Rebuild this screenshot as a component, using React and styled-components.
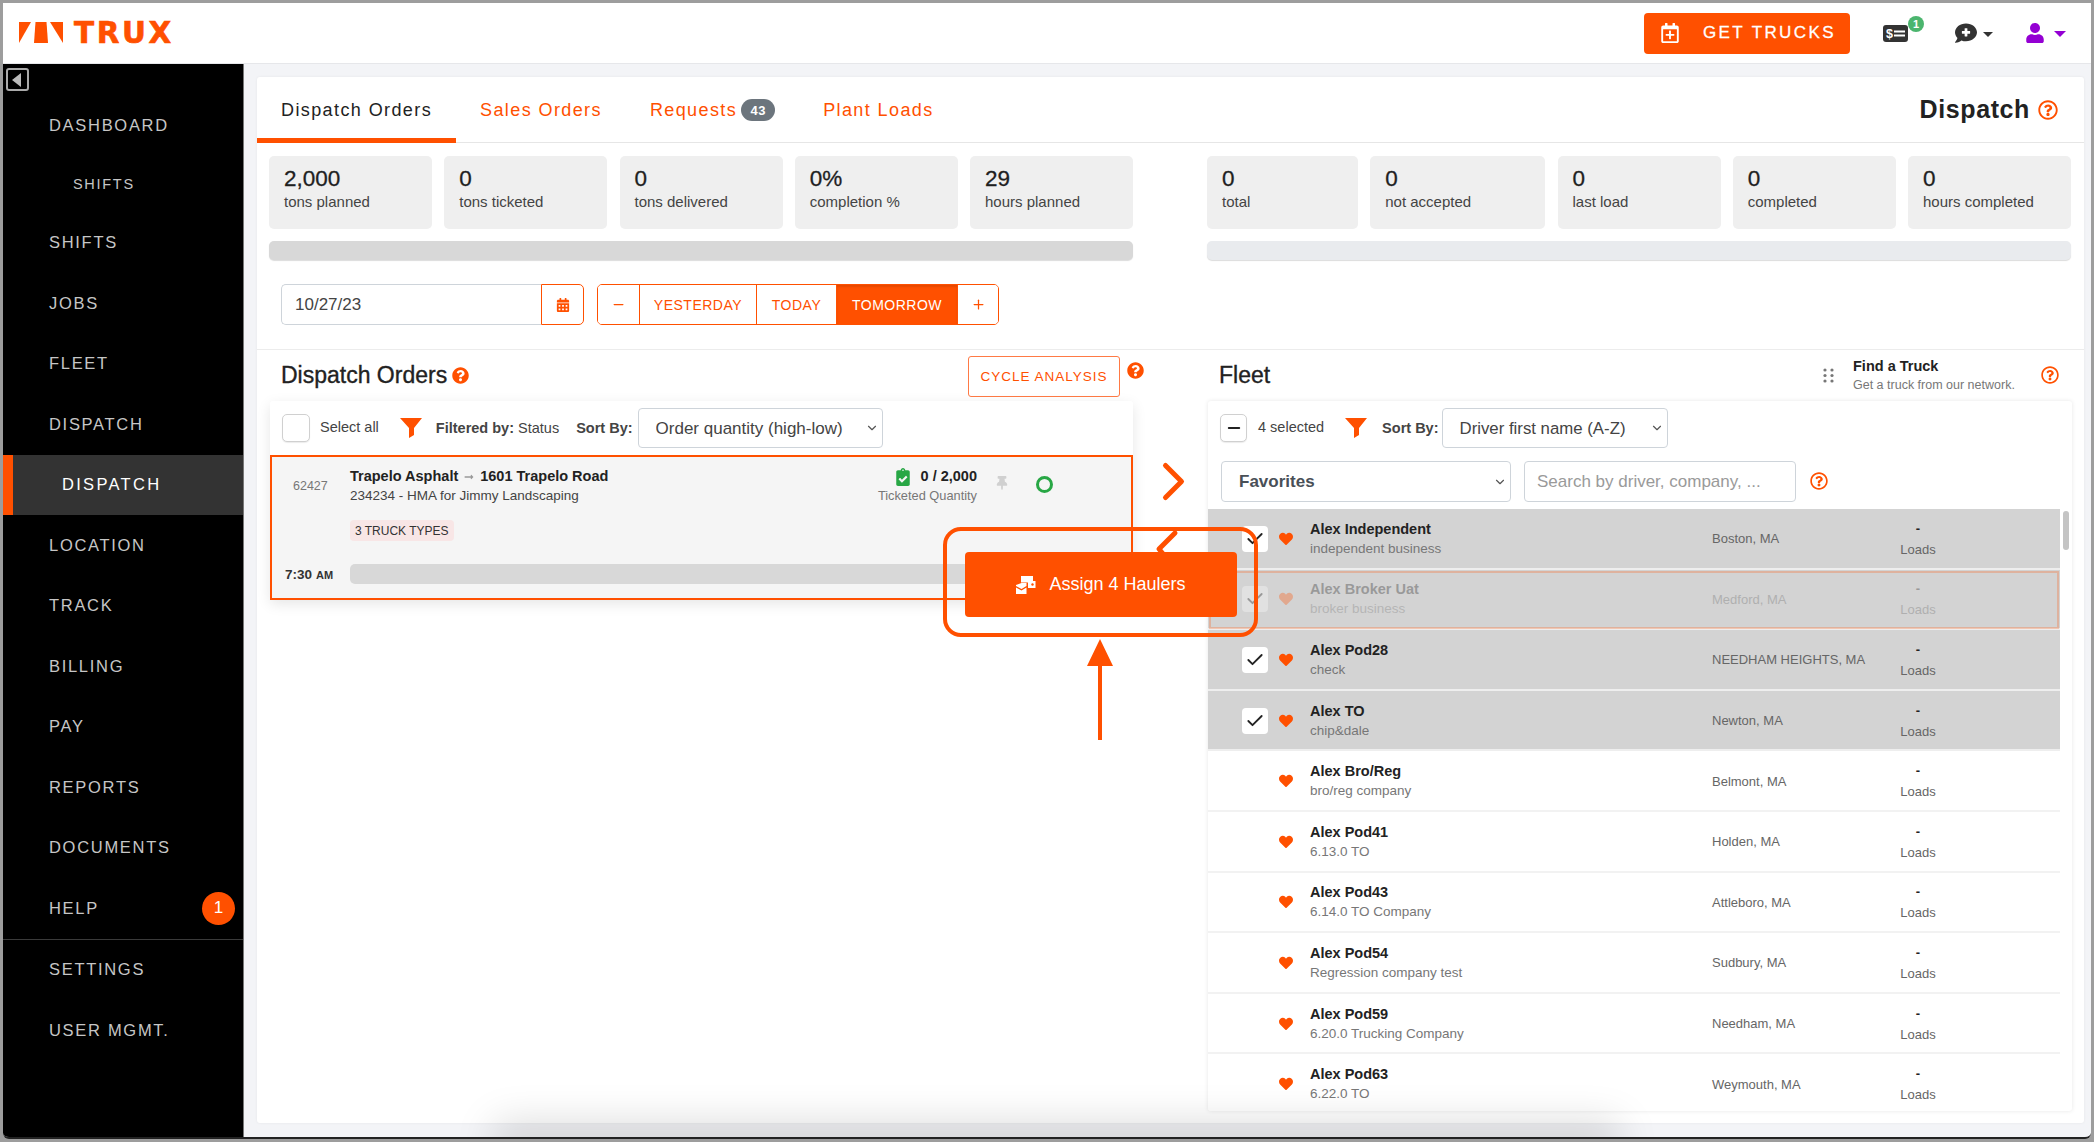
import React from 'react';
import styled, { createGlobalStyle } from 'styled-components';
import {
  FaRegCalendarPlus,
  FaCommentMedical,
  FaUser,
  FaQuestionCircle,
  FaRegQuestionCircle,
  FaCalendarAlt,
  FaClipboardCheck,
  FaThumbtack,
  FaHeart,
  FaLongArrowAltRight,
} from 'react-icons/fa';
import { Check, ChevronDown, Minus, Plus } from 'lucide-react';

const ORANGE = '#ff5000';

const GlobalStyle = createGlobalStyle`
  html, body {
    margin: 0;
    height: 1142px;
    overflow: hidden;
    background: #9d9d9d;
  }
  * { box-sizing: border-box; }
  body, input, select, button {
    font-family: "Liberation Sans", Arial, sans-serif;
  }
`;

const Frame = styled.div`
  position: relative;
  margin: 3px 0 0 3px;
  width: 2088px;
  height: 1136px;
  border-bottom: 2px solid #222;
  border-radius: 0 0 6px 6px;
  overflow: hidden;
  display: flex;
  flex-direction: column;
  background: #f3f4f7;
`;

/* top bar */
const TopBar = styled.header`
  height: 61px;
  flex: none;
  background: #fff;
  border-bottom: 1px solid #e6e7ea;
  display: flex;
  align-items: center;
  padding: 0 25px 0 16px;
`;

const Logo = styled.div`
  display: flex;
  align-items: center;
  gap: 11px;
  margin-top: -1px;
`;

const LogoText = styled.span`
  font-family: "DejaVu Sans", sans-serif;
  font-weight: 700;
  font-size: 29.5px;
  line-height: 22px;
  letter-spacing: 2.6px;
  color: ${ORANGE};
  -webkit-text-stroke: 0.6px ${ORANGE};
`;

const GetTrucks = styled.button`
  margin-left: auto;
  width: 206px;
  height: 41px;
  border: none;
  border-radius: 4px;
  background: ${ORANGE};
  color: #fff;
  display: flex;
  align-items: center;
  padding: 0 0 0 16px;
  gap: 23px;
  font-size: 17px;
  letter-spacing: 2.4px;
  -webkit-text-stroke: 0.3px #fff;
`;

const MoneyIcon = styled.div`
  position: relative;
  margin-left: 33px;
  display: flex;
`;

const GreenDot = styled.span`
  position: absolute;
  left: 25px;
  top: -9px;
  width: 16px;
  height: 16px;
  border-radius: 50%;
  background: #4bb56e;
  color: #fff;
  font-size: 11px;
  font-weight: 700;
  display: flex;
  align-items: center;
  justify-content: center;
`;

const Caret = styled.span`
  width: 0;
  height: 0;
  margin-left: ${(p) => p.$gap}px;
  margin-top: 2px;
  border-left: ${(p) => p.$size}px solid transparent;
  border-right: ${(p) => p.$size}px solid transparent;
  border-top: ${(p) => p.$size}px solid ${(p) => p.$color};
`;

const HeaderIcon = styled.span`
  display: flex;
  margin-left: ${(p) => p.$left}px;
  color: ${(p) => p.$color};
`;

/* sidebar */
const Body = styled.div`
  flex: 1;
  display: flex;
  min-height: 0;
`;

const Sidebar = styled.aside`
  width: 241px;
  flex: none;
  background: #000;
  border-right: 1px solid #777;
  display: flex;
  flex-direction: column;
`;

const Toggle = styled.div`
  width: 23px;
  height: 23px;
  margin: 4px 0 0 3px;
  border: 2px solid #aaa;
  border-radius: 3px;
  display: flex;
  align-items: center;
  padding-left: 4px;
  &::before {
    content: '';
    border-top: 7px solid transparent;
    border-bottom: 7px solid transparent;
    border-right: 9px solid #bbb;
  }
`;

const NavGroup = styled.nav`
  margin-top: ${(p) => p.$top || 0}px;
  border-top: ${(p) => (p.$rule ? '1px solid #3a3a3a' : 'none')};
`;

const NavItem = styled.div`
  height: ${(p) => (p.$sub ? 57 : 60.5)}px;
  display: flex;
  align-items: center;
  justify-content: space-between;
  padding-left: ${(p) => (p.$sub ? 70 : p.$active ? 49 : 46)}px;
  padding-right: 8px;
  font-size: ${(p) => (p.$sub ? 14.5 : 16.5)}px;
  letter-spacing: ${(p) => (p.$active ? 2.3 : 1.7)}px;
  color: ${(p) => (p.$active ? '#fff' : '#c6c6c6')};
  background: ${(p) => (p.$active ? '#333' : 'transparent')};
  border-left: ${(p) => (p.$active ? `10px solid ${ORANGE}` : 'none')};
`;

const NavBadge = styled.span`
  width: 33px;
  height: 33px;
  border-radius: 50%;
  background: ${ORANGE};
  color: #fff;
  font-size: 17px;
  letter-spacing: 0;
  display: flex;
  align-items: center;
  justify-content: center;
`;

/* main card */
const Main = styled.main`
  flex: 1;
  min-width: 0;
  padding: 13px 7px 14px 13px;
`;

const Card = styled.div`
  height: 100%;
  background: #fff;
  border-radius: 3px;
  box-shadow: 0 0 3px rgba(0, 0, 0, 0.06);
  display: flex;
  flex-direction: column;
`;

const TabBar = styled.div`
  height: 66px;
  flex: none;
  display: flex;
  align-items: stretch;
  border-bottom: 1px solid #e6e6e6;
  padding-right: 26px;
`;

const Tab = styled.div`
  display: flex;
  align-items: center;
  gap: 4px;
  padding: 5px 24px 0;
  margin-bottom: -1px;
  font-size: 18px;
  letter-spacing: 1.4px;
  color: ${(p) => (p.$active ? '#222' : ORANGE)};
  border-bottom: 5px solid ${(p) => (p.$active ? ORANGE : 'transparent')};
`;

const CountBadge = styled.span`
  width: 34px;
  height: 22px;
  border-radius: 11px;
  background: #6c757d;
  color: #fff;
  font-size: 13px;
  font-weight: 700;
  letter-spacing: 0.5px;
  display: flex;
  align-items: center;
  justify-content: center;
`;

const PageTitle = styled.div`
  margin-left: auto;
  display: flex;
  align-items: center;
  gap: 8px;
  font-size: 25px;
  font-weight: 700;
  color: #222;
  letter-spacing: 0.6px;
`;

const Columns = styled.div`
  display: grid;
  grid-template-columns: 864px 864px;
  column-gap: 74px;
  padding: 0 13px 0 12px;
`;

const StatsArea = styled(Columns)`
  padding-top: 13px;
  flex: none;
`;

const StatRow = styled.div`
  display: grid;
  grid-template-columns: ${(p) => p.$cols};
  column-gap: 12.25px;
`;

const Stat = styled.div`
  height: 73px;
  background: #efefef;
  border-radius: 5px;
  padding: 10px 15px 0;
`;

const StatValue = styled.div`
  font-size: 22.5px;
  line-height: 25px;
  color: #1f1f1f;
  -webkit-text-stroke: 0.3px #1f1f1f;
`;

const StatLabel = styled.div`
  font-size: 15px;
  line-height: 21px;
  color: #444;
`;

const ProgressBar = styled.div`
  height: 19px;
  margin-top: 12px;
  border-radius: 5px;
  background: ${(p) => p.$color};
  box-shadow: 0 1px 1px rgba(0, 0, 0, 0.14);
`;

const DateRow = styled.div`
  flex: none;
  display: flex;
  align-items: stretch;
  height: 41px;
  margin: 24px 0 24px 24px;
`;

const DateInput = styled.input`
  width: 260px;
  border: 1px solid #ced4da;
  border-right: none;
  border-radius: 5px 0 0 5px;
  padding: 0 13px;
  font-size: 17px;
  color: #444;
  outline: none;
`;

const CalendarButton = styled.button`
  width: 43px;
  border: 1px solid ${ORANGE};
  border-radius: 0 5px 5px 0;
  background: #fff;
  color: ${ORANGE};
  display: flex;
  align-items: center;
  justify-content: center;
  padding: 0;
`;

const DayButtons = styled.div`
  display: flex;
  margin-left: 13px;
  border: 1px solid ${ORANGE};
  border-radius: 5px;
  overflow: hidden;
`;

const DayButton = styled.button`
  width: ${(p) => p.$width}px;
  border: none;
  border-left: ${(p) => (p.$first ? 'none' : `1px solid ${ORANGE}`)};
  background: ${(p) => (p.$on ? ORANGE : '#fff')};
  box-shadow: ${(p) => (p.$on ? 'inset 0 2px 2px rgba(0,0,0,.1)' : 'none')};
  color: ${(p) => (p.$on ? '#fff' : ORANGE)};
  font-size: 14px;
  letter-spacing: 0.5px;
  display: flex;
  align-items: center;
  justify-content: center;
  padding: 0;
`;

const Lower = styled(Columns)`
  flex: 1;
  min-height: 0;
  border-top: 1px solid #ececec;
`;

const Column = styled.section`
  display: flex;
  flex-direction: column;
  min-height: 0;
`;

const HeadingRow = styled.div`
  height: 51px;
  flex: none;
  display: flex;
  align-items: center;
  gap: 5px;
  padding: 0 0 1px 12px;
`;

const Heading = styled.h2`
  margin: 0;
  font-size: 23px;
  font-weight: 400;
  color: #222;
  -webkit-text-stroke: 0.35px #222;
`;

const CycleWrap = styled.div`
  margin-left: auto;
  margin-right: -11px;
  display: flex;
  align-items: flex-start;
  gap: 7px;
  color: ${ORANGE};
`;

const CycleHelp = styled.span`
  display: flex;
  margin-top: 9px;
`;

const CycleButton = styled.button`
  width: 152px;
  height: 41px;
  margin-top: 3px;
  border: 1.5px solid #ff7a45;
  border-radius: 3px;
  background: #fff;
  color: ${ORANGE};
  font-size: 13.5px;
  letter-spacing: 1px;
  padding: 0;
`;

const Panel = styled.div`
  margin: 0 0 0 1px;
  background: #fff;
  border-radius: 3px;
  box-shadow: 0 0 4px rgba(0, 0, 0, 0.1);
  display: flex;
  flex-direction: column;
`;

const OrdersPanel = styled(Panel)`
  box-shadow: 0 4px 14px rgba(0, 0, 0, 0.1);
`;

const FleetPanel = styled(Panel)`
  height: 710px;
  overflow: hidden;
  margin-right: -1px;
`;

const Toolbar = styled.div`
  height: 54px;
  flex: none;
  display: flex;
  align-items: center;
  padding-left: 12px;
  font-size: 14.5px;
  color: #444;
`;

const CheckBox = styled.span`
  width: ${(p) => p.$size}px;
  height: 28px;
  flex: none;
  border: 1px solid #d0d0d0;
  border-radius: 5px;
  background: #fff;
  box-shadow: 0 1px 1px rgba(0, 0, 0, 0.08);
  display: flex;
  align-items: center;
  justify-content: center;
  color: #222;
`;

const ToolLabel = styled.span`
  margin: 0 ${(p) => p.$right}px ${(p) => p.$lift || 0}px ${(p) => p.$left}px;
  white-space: nowrap;
`;

const Strong = styled.b`
  color: #444;
  font-weight: 700;
`;

const SelectWrap = styled.div`
  position: relative;
  width: ${(p) => p.$width}px;
  height: ${(p) => p.$height}px;
  flex: none;
  svg {
    position: absolute;
    right: 4px;
    top: 50%;
    margin-top: -7px;
    color: #555;
    pointer-events: none;
  }
`;

const Select = styled.select`
  width: 100%;
  height: 100%;
  appearance: none;
  border: 1px solid #ced4da;
  border-radius: 4px;
  background: #fff;
  padding: 0 17px;
  font-size: ${(p) => p.$size || 17}px;
  font-weight: ${(p) => (p.$bold ? 700 : 400)};
  color: ${(p) => (p.$bold ? '#495057' : '#444')};
  outline: none;
`;

/* order row */
const OrderRow = styled.div`
  height: 145px;
  border: 2.5px solid ${ORANGE};
  background: #f5f5f5;
  display: flex;
  flex-direction: column;
`;

const OrderTop = styled.div`
  display: flex;
  align-items: flex-start;
  padding-top: 10px;
  height: 52px;
`;

const OrderId = styled.div`
  width: 78px;
  flex: none;
  padding: 12px 0 0 21px;
  font-size: 12.5px;
  color: #777;
`;

const OrderTitle = styled.div`
  font-size: 14.5px;
  line-height: 19px;
  font-weight: 700;
  color: #222;
  display: flex;
  align-items: center;
  gap: 6px;
  svg { color: #999; }
`;

const OrderSub = styled.div`
  font-size: 13.5px;
  line-height: 20px;
  color: #444;
`;

const Quantity = styled.div`
  margin-left: auto;
  text-align: right;
`;

const QuantityValue = styled.div`
  font-size: 14.5px;
  line-height: 19px;
  font-weight: 700;
  color: #222;
  display: flex;
  align-items: center;
  justify-content: flex-end;
  gap: 9px;
  svg { color: #28a745; }
`;

const QuantityLabel = styled.div`
  font-size: 12.8px;
  line-height: 20px;
  color: #777;
`;

const PinIcon = styled.span`
  display: flex;
  margin: 9px 0 0 18px;
  color: #d0d0d0;
`;

const StatusRing = styled.span`
  width: 17px;
  height: 17px;
  margin: 9px 78px 0 27px;
  border: 3.5px solid #28a745;
  border-radius: 50%;
`;

const TruckTag = styled.span`
  align-self: flex-start;
  margin: 11px 0 0 78px;
  height: 21px;
  padding: 0 5px;
  border-radius: 4px;
  background: #f8e6e6;
  font-size: 12px;
  color: #333;
  display: flex;
  align-items: center;
`;

const TimeRow = styled.div`
  display: flex;
  align-items: center;
  margin-top: 23px;
`;

const TimeLabel = styled.div`
  width: 78px;
  flex: none;
  padding-left: 13px;
  font-size: 13.5px;
  font-weight: 700;
  color: #333;
  small { font-size: 11px; margin-left: 4px; }
`;

const TimeBar = styled.div`
  flex: 1;
  height: 20px;
  margin-right: 10px;
  border-radius: 5px;
  background: #d8d8d8;
`;

/* fleet */
const FilterRow = styled.div`
  height: 54px;
  flex: none;
  display: flex;
  align-items: flex-start;
  padding: 6px 0 0 13px;
  gap: 13px;
`;

const SearchInput = styled.input`
  width: 272px;
  height: 41px;
  border: 1px solid #ced4da;
  border-radius: 4px;
  padding: 0 12px;
  font-size: 17px;
  outline: none;
  &::placeholder { color: #9a9a9a; }
`;

const FilterHelp = styled.span`
  display: flex;
  margin: 11px 0 0 1px;
  color: ${ORANGE};
`;

const FindTruck = styled.div`
  margin-left: auto;
  display: flex;
  align-items: center;
  padding-right: 12px;
  color: ${ORANGE};
`;

const FindText = styled.div`
  margin: 1px 23px 0 19px;
  width: 165px;
`;

const FindTitle = styled.div`
  font-size: 14.5px;
  line-height: 19px;
  font-weight: 700;
  color: #222;
`;

const FindSub = styled.div`
  font-size: 12.5px;
  line-height: 19px;
  color: #777;
`;

const List = styled.div`
  position: relative;
  flex: 1;
  min-height: 0;
  overflow: hidden;
`;

const Scroller = styled.div`
  position: absolute;
  right: 3px;
  top: 2px;
  width: 6px;
  height: 39px;
  border-radius: 3px;
  background: #c4c4c4;
`;

const Row = styled.div`
  width: 852px;
  height: 60.6px;
  flex: none;
  display: flex;
  align-items: center;
  padding: 1px 0 0 34px;
  background: ${(p) => (p.$selected ? '#d3d3d3' : '#fff')};
  border-bottom: 2px solid ${(p) => (p.$selected ? '#eee' : '#f2f2f2')};
  outline: ${(p) => (p.$faded ? '2px solid rgba(255, 80, 0, 0.25)' : 'none')};
  outline-offset: -3px;
`;

const RowContent = styled.div`
  display: flex;
  align-items: center;
  opacity: ${(p) => (p.$faded ? 0.32 : 1)};
`;

const RowCheck = styled.span`
  width: 26px;
  height: 26px;
  border-radius: 4px;
  background: ${(p) => (p.$on ? '#fff' : 'transparent')};
  color: #222;
  display: flex;
  align-items: center;
  justify-content: center;
`;

const Heart = styled.span`
  display: flex;
  margin: 0 17px 0 11px;
  color: ${ORANGE};
`;

const DriverInfo = styled.div`
  width: 402px;
`;

const DriverName = styled.div`
  font-size: 14.5px;
  line-height: 20px;
  font-weight: 700;
  color: #222;
`;

const DriverCompany = styled.div`
  font-size: 13.5px;
  line-height: 20px;
  color: #777;
`;

const City = styled.div`
  width: 170px;
  font-size: 13px;
  color: #666;
`;

const LoadsCell = styled.div`
  width: 72px;
  text-align: center;
  color: #666;
  font-size: 13px;
  line-height: 21px;
  b { color: #222; display: block; }
`;

/* annotations drawn over the screenshot */
const Callout = styled.div`
  position: absolute;
  left: 940px;
  top: 524px;
  width: 315px;
  height: 110px;
  border: 4px solid ${ORANGE};
  border-radius: 18px;
`;

const AssignButton = styled.button`
  position: absolute;
  left: 962px;
  top: 549px;
  width: 272px;
  height: 65px;
  border: none;
  border-radius: 4px;
  background: ${ORANGE};
  color: #fff;
  font-size: 18px;
  display: flex;
  align-items: center;
  justify-content: center;
  gap: 13px;
  padding: 0;
`;

const Drawing = styled.svg`
  position: absolute;
  left: ${(p) => p.$x}px;
  top: ${(p) => p.$y}px;
  overflow: visible;
`;

const ScreenShade = styled.div`
  position: absolute;
  left: 500px;
  right: 480px;
  bottom: -24px;
  height: 24px;
  box-shadow: 0 -6px 40px 8px rgba(0, 0, 0, 0.15);
  pointer-events: none;
`;

const Funnel = () => (
  <svg width="22" height="20" viewBox="0 0 22 20">
    <path d="M0 0H22L14 10V17L9 20V10Z" fill={ORANGE} />
  </svg>
);

const Grip = () => (
  <svg width="11" height="15" viewBox="0 0 11 15" fill="#777">
    {[2, 7.5, 13].map((y) => (
      <g key={y}>
        <circle cx="2" cy={y} r="1.6" />
        <circle cx="9" cy={y} r="1.6" />
      </g>
    ))}
  </svg>
);

const LogoMark = () => (
  <svg width="44" height="21" viewBox="0 0 44 21" fill={ORANGE}>
    <path d="M0 0H12L0 21Z" />
    <path d="M15 21L16.5 0H27.5L29 21Z" />
    <path d="M31 0H44V21Z" />
  </svg>
);

const MoneyGlyph = () => (
  <svg width="25" height="17" viewBox="0 0 25 17">
    <rect width="25" height="17" rx="3" fill="#333" />
    <text x="3" y="13" fontSize="12.5" fontWeight="700" fill="#fff" fontFamily="Liberation Sans">$</text>
    <path d="M11 6.5H22M11 10.5H22" stroke="#fff" strokeWidth="2" />
  </svg>
);

const HaulerIcon = () => (
  <svg width="20" height="18" viewBox="0 0 20 18" fill="#fff">
    <path d="M5 0H17V5H19.5V12H12V6.5H5Z" />
    <circle cx="16.5" cy="8.5" r="1.2" fill={ORANGE} />
    <path d="M0 9L5.5 7H10.5V10L5.5 13L0 10Z" />
    <path d="M0 11.5L5.5 14.5L10.5 11.5V18H0Z" />
  </svg>
);

const navTop = [
  { label: 'DASHBOARD' },
  { label: 'SHIFTS', sub: true },
  { label: 'SHIFTS' },
  { label: 'JOBS' },
  { label: 'FLEET' },
  { label: 'DISPATCH' },
  { label: 'DISPATCH', active: true },
  { label: 'LOCATION' },
  { label: 'TRACK' },
  { label: 'BILLING' },
  { label: 'PAY' },
  { label: 'REPORTS' },
  { label: 'DOCUMENTS' },
  { label: 'HELP', badge: 1 },
];

const leftStats = [
  ['2,000', 'tons planned'],
  ['0', 'tons ticketed'],
  ['0', 'tons delivered'],
  ['0%', 'completion %'],
  ['29', 'hours planned'],
];

const rightStats = [
  ['0', 'total'],
  ['0', 'not accepted'],
  ['0', 'last load'],
  ['0', 'completed'],
  ['0', 'hours completed'],
];

const drivers = [
  { name: 'Alex Independent', company: 'independent business', city: 'Boston, MA', selected: true },
  { name: 'Alex Broker Uat', company: 'broker business', city: 'Medford, MA', selected: true, faded: true },
  { name: 'Alex Pod28', company: 'check', city: 'NEEDHAM HEIGHTS, MA', selected: true },
  { name: 'Alex TO', company: 'chip&dale', city: 'Newton, MA', selected: true },
  { name: 'Alex Bro/Reg', company: 'bro/reg company', city: 'Belmont, MA' },
  { name: 'Alex Pod41', company: '6.13.0 TO', city: 'Holden, MA' },
  { name: 'Alex Pod43', company: '6.14.0 TO Company', city: 'Attleboro, MA' },
  { name: 'Alex Pod54', company: 'Regression company test', city: 'Sudbury, MA' },
  { name: 'Alex Pod59', company: '6.20.0 Trucking Company', city: 'Needham, MA' },
  { name: 'Alex Pod63', company: '6.22.0 TO', city: 'Weymouth, MA' },
];

const App = () => {
  return (
    <Frame>
      <GlobalStyle />
      <TopBar>
        <Logo>
          <LogoMark />
          <LogoText>TRUX</LogoText>
        </Logo>
        <GetTrucks>
          <FaRegCalendarPlus size={20} />
          GET TRUCKS
        </GetTrucks>
        <MoneyIcon>
          <MoneyGlyph />
          <GreenDot>1</GreenDot>
        </MoneyIcon>
        <HeaderIcon $left={47} $color="#333">
          <FaCommentMedical size={22} />
        </HeaderIcon>
        <Caret $gap={6} $size={5} $color="#333" />
        <HeaderIcon $left={32} $color="#9400d3">
          <FaUser size={20} />
        </HeaderIcon>
        <Caret $gap={9} $size={6} $color="#9400d3" />
      </TopBar>

      <Body>
        <Sidebar>
          <Toggle />
          <NavGroup $top={4}>
            {navTop.map((item, i) => (
              <NavItem key={i} $sub={item.sub} $active={item.active}>
                {item.label}
                {item.badge && <NavBadge>{item.badge}</NavBadge>}
              </NavItem>
            ))}
          </NavGroup>
          <NavGroup $rule>
            <NavItem>SETTINGS</NavItem>
            <NavItem>USER MGMT.</NavItem>
          </NavGroup>
        </Sidebar>

        <Main>
          <Card>
            <TabBar>
              <Tab $active>Dispatch Orders</Tab>
              <Tab>Sales Orders</Tab>
              <Tab>
                Requests <CountBadge>43</CountBadge>
              </Tab>
              <Tab>Plant Loads</Tab>
              <PageTitle>
                Dispatch
                <FaRegQuestionCircle size={20} color={ORANGE} />
              </PageTitle>
            </TabBar>

            <StatsArea>
              <div>
                <StatRow $cols="repeat(5, 1fr)">
                  {leftStats.map(([value, label]) => (
                    <Stat key={label}>
                      <StatValue>{value}</StatValue>
                      <StatLabel>{label}</StatLabel>
                    </Stat>
                  ))}
                </StatRow>
                <ProgressBar $color="#d8d8d8" />
              </div>
              <div>
                <StatRow $cols="151px 175px 1fr 1fr 1fr">
                  {rightStats.map(([value, label]) => (
                    <Stat key={label}>
                      <StatValue>{value}</StatValue>
                      <StatLabel>{label}</StatLabel>
                    </Stat>
                  ))}
                </StatRow>
                <ProgressBar $color="#e9ebee" />
              </div>
            </StatsArea>

            <DateRow>
              <DateInput defaultValue="10/27/23" />
              <CalendarButton>
                <FaCalendarAlt size={14} />
              </CalendarButton>
              <DayButtons>
                <DayButton $first $width={41}>
                  <Minus size={15} />
                </DayButton>
                <DayButton $width={117}>YESTERDAY</DayButton>
                <DayButton $width={80}>TODAY</DayButton>
                <DayButton $width={121} $on>TOMORROW</DayButton>
                <DayButton $width={41}>
                  <Plus size={15} />
                </DayButton>
              </DayButtons>
            </DateRow>

            <Lower>
              <Column>
                <HeadingRow>
                  <Heading>Dispatch Orders</Heading>
                  <FaQuestionCircle size={17} color={ORANGE} />
                  <CycleWrap>
                    <CycleButton>CYCLE ANALYSIS</CycleButton>
                    <CycleHelp>
                      <FaQuestionCircle size={17} />
                    </CycleHelp>
                  </CycleWrap>
                </HeadingRow>
                <OrdersPanel>
                  <Toolbar>
                    <CheckBox $size={28} />
                    <ToolLabel $left={10} $right={21} $lift={3}>Select all</ToolLabel>
                    <Funnel />
                    <ToolLabel $left={14} $right={17}>
                      <Strong>Filtered by:</Strong> Status
                    </ToolLabel>
                    <ToolLabel $left={0} $right={5}>
                      <Strong>Sort By:</Strong>
                    </ToolLabel>
                    <SelectWrap $width={245} $height={40}>
                      <Select defaultValue="q">
                        <option value="q">Order quantity (high-low)</option>
                      </Select>
                      <ChevronDown size={14} />
                    </SelectWrap>
                  </Toolbar>
                  <OrderRow>
                    <OrderTop>
                      <OrderId>62427</OrderId>
                      <div>
                        <OrderTitle>
                          Trapelo Asphalt
                          <FaLongArrowAltRight size={10} />
                          1601 Trapelo Road
                        </OrderTitle>
                        <OrderSub>234234 - HMA for Jimmy Landscaping</OrderSub>
                      </div>
                      <Quantity>
                        <QuantityValue>
                          <FaClipboardCheck size={18} />
                          0 / 2,000
                        </QuantityValue>
                        <QuantityLabel>Ticketed Quantity</QuantityLabel>
                      </Quantity>
                      <PinIcon>
                        <FaThumbtack size={14} />
                      </PinIcon>
                      <StatusRing />
                    </OrderTop>
                    <TruckTag>3 TRUCK TYPES</TruckTag>
                    <TimeRow>
                      <TimeLabel>
                        7:30<small>AM</small>
                      </TimeLabel>
                      <TimeBar />
                    </TimeRow>
                  </OrderRow>
                </OrdersPanel>
              </Column>

              <Column>
                <HeadingRow>
                  <Heading>Fleet</Heading>
                  <FindTruck>
                    <Grip />
                    <FindText>
                      <FindTitle>Find a Truck</FindTitle>
                      <FindSub>Get a truck from our network.</FindSub>
                    </FindText>
                    <FaRegQuestionCircle size={18} />
                  </FindTruck>
                </HeadingRow>
                <FleetPanel>
                  <Toolbar>
                    <CheckBox $size={27}>
                      <Minus size={18} strokeWidth={2.5} />
                    </CheckBox>
                    <ToolLabel $left={11} $right={21} $lift={3}>4 selected</ToolLabel>
                    <Funnel />
                    <ToolLabel $left={15} $right={3}>
                      <Strong>Sort By:</Strong>
                    </ToolLabel>
                    <SelectWrap $width={226} $height={40}>
                      <Select $size={16.8} defaultValue="d">
                        <option value="d">Driver first name (A-Z)</option>
                      </Select>
                      <ChevronDown size={14} />
                    </SelectWrap>
                  </Toolbar>
                  <FilterRow>
                    <SelectWrap $width={290} $height={41}>
                      <Select $bold defaultValue="f">
                        <option value="f">Favorites</option>
                      </Select>
                      <ChevronDown size={14} />
                    </SelectWrap>
                    <SearchInput placeholder="Search by driver, company, ..." />
                    <FilterHelp>
                      <FaRegQuestionCircle size={18} />
                    </FilterHelp>
                  </FilterRow>
                  <List>
                    {drivers.map((d) => (
                      <Row key={d.name} $selected={d.selected} $faded={d.faded}>
                        <RowContent $faded={d.faded}>
                          <RowCheck $on={d.selected}>
                            {d.selected && <Check size={20} strokeWidth={2.2} />}
                          </RowCheck>
                          <Heart>
                            <FaHeart size={14} />
                          </Heart>
                          <DriverInfo>
                            <DriverName>{d.name}</DriverName>
                            <DriverCompany>{d.company}</DriverCompany>
                          </DriverInfo>
                          <City>{d.city}</City>
                          <LoadsCell>
                            <b>-</b>
                            Loads
                          </LoadsCell>
                        </RowContent>
                      </Row>
                    ))}
                    <Scroller />
                  </List>
                </FleetPanel>
              </Column>
            </Lower>
          </Card>
        </Main>
      </Body>

      <Drawing $x={1160} $y={460} width="21" height="37" viewBox="0 0 21 37">
        <path d="M2.5 2.5L18.5 18.5L2.5 34.5" fill="none" stroke={ORANGE} strokeWidth="5" strokeLinecap="round" strokeLinejoin="round" />
      </Drawing>
      <Drawing $x={1153} $y={528} width="21" height="22" viewBox="0 0 21 22">
        <path d="M19 2L3 18L8 24" fill="none" stroke={ORANGE} strokeWidth="5" strokeLinecap="round" strokeLinejoin="round" />
      </Drawing>
      <Callout />
      <AssignButton>
        <HaulerIcon />
        Assign 4 Haulers
      </AssignButton>
      <Drawing $x={1084} $y={636} width="26" height="101" viewBox="0 0 26 101">
        <path d="M13 0L26 27H15V101H11V27H0Z" fill={ORANGE} />
      </Drawing>
      <ScreenShade />
    </Frame>
  );
};

export default App;
